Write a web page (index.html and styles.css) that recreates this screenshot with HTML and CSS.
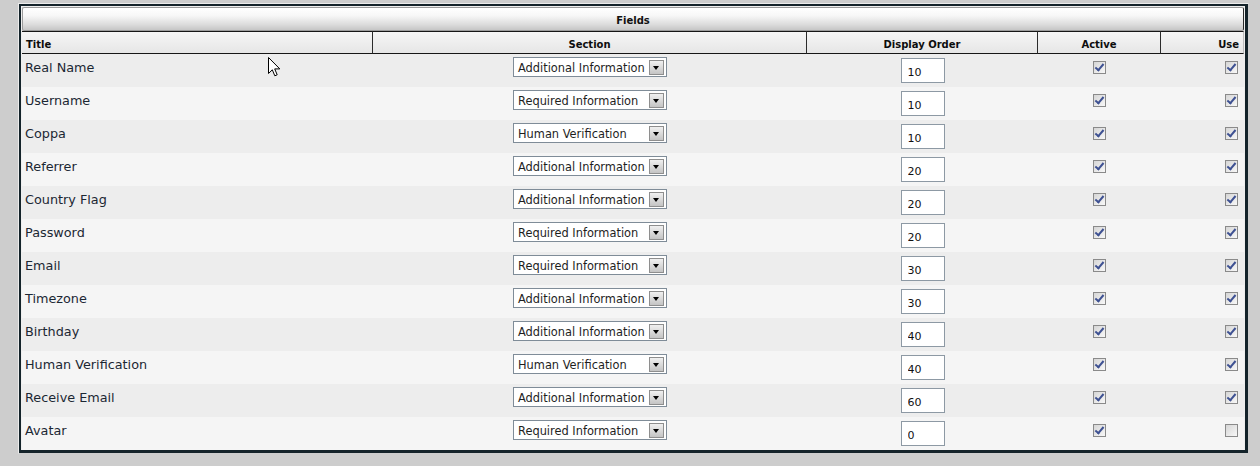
FILE: index.html
```html
<!DOCTYPE html>
<html>
<head>
<meta charset="utf-8">
<title>Fields</title>
<link rel="stylesheet" href="styles.css">
</head>
<body>
<div class="panel">
  <div class="frame">
    <div class="bar">Fields</div>
    <table class="grid">
      <colgroup>
        <col class="c-title"><col class="c-section"><col class="c-order"><col class="c-active"><col class="c-use">
      </colgroup>
      <thead>
        <tr>
          <th class="h-title">Title</th>
          <th class="h-center">Section</th>
          <th class="h-center">Display Order</th>
          <th class="h-center">Active</th>
          <th class="h-use">Use</th>
        </tr>
      </thead>
      <tbody>
        <tr><td class="t-title">Real Name</td><td class="t-center"><div class="sel"><span>Additional Information</span><span class="btn"></span></div></td><td class="t-center"><input class="num" type="text" value="10"></td><td class="t-center"><span class="cb on"></span></td><td class="t-use"><span class="cb on"></span></td></tr>
        <tr><td class="t-title">Username</td><td class="t-center"><div class="sel"><span>Required Information</span><span class="btn"></span></div></td><td class="t-center"><input class="num" type="text" value="10"></td><td class="t-center"><span class="cb on"></span></td><td class="t-use"><span class="cb on"></span></td></tr>
        <tr><td class="t-title">Coppa</td><td class="t-center"><div class="sel"><span>Human Verification</span><span class="btn"></span></div></td><td class="t-center"><input class="num" type="text" value="10"></td><td class="t-center"><span class="cb on"></span></td><td class="t-use"><span class="cb on"></span></td></tr>
        <tr><td class="t-title">Referrer</td><td class="t-center"><div class="sel"><span>Additional Information</span><span class="btn"></span></div></td><td class="t-center"><input class="num" type="text" value="20"></td><td class="t-center"><span class="cb on"></span></td><td class="t-use"><span class="cb on"></span></td></tr>
        <tr><td class="t-title">Country Flag</td><td class="t-center"><div class="sel"><span>Additional Information</span><span class="btn"></span></div></td><td class="t-center"><input class="num" type="text" value="20"></td><td class="t-center"><span class="cb on"></span></td><td class="t-use"><span class="cb on"></span></td></tr>
        <tr><td class="t-title">Password</td><td class="t-center"><div class="sel"><span>Required Information</span><span class="btn"></span></div></td><td class="t-center"><input class="num" type="text" value="20"></td><td class="t-center"><span class="cb on"></span></td><td class="t-use"><span class="cb on"></span></td></tr>
        <tr><td class="t-title">Email</td><td class="t-center"><div class="sel"><span>Required Information</span><span class="btn"></span></div></td><td class="t-center"><input class="num" type="text" value="30"></td><td class="t-center"><span class="cb on"></span></td><td class="t-use"><span class="cb on"></span></td></tr>
        <tr><td class="t-title">Timezone</td><td class="t-center"><div class="sel"><span>Additional Information</span><span class="btn"></span></div></td><td class="t-center"><input class="num" type="text" value="30"></td><td class="t-center"><span class="cb on"></span></td><td class="t-use"><span class="cb on"></span></td></tr>
        <tr><td class="t-title">Birthday</td><td class="t-center"><div class="sel"><span>Additional Information</span><span class="btn"></span></div></td><td class="t-center"><input class="num" type="text" value="40"></td><td class="t-center"><span class="cb on"></span></td><td class="t-use"><span class="cb on"></span></td></tr>
        <tr><td class="t-title">Human Verification</td><td class="t-center"><div class="sel"><span>Human Verification</span><span class="btn"></span></div></td><td class="t-center"><input class="num" type="text" value="40"></td><td class="t-center"><span class="cb on"></span></td><td class="t-use"><span class="cb on"></span></td></tr>
        <tr><td class="t-title">Receive Email</td><td class="t-center"><div class="sel"><span>Additional Information</span><span class="btn"></span></div></td><td class="t-center"><input class="num" type="text" value="60"></td><td class="t-center"><span class="cb on"></span></td><td class="t-use"><span class="cb on"></span></td></tr>
        <tr><td class="t-title">Avatar</td><td class="t-center"><div class="sel"><span>Required Information</span><span class="btn"></span></div></td><td class="t-center"><input class="num" type="text" value="0"></td><td class="t-center"><span class="cb on"></span></td><td class="t-use"><span class="cb"></span></td></tr>
      </tbody>
    </table>
  </div>
</div>
<svg class="cursor" width="13" height="21" viewBox="0 0 13 21"><path d="M0.5 0.5 L0.5 16.5 L4.3 12.8 L6.8 18.8 L9.2 17.8 L6.7 11.9 L11.8 11.9 Z" fill="#fff" stroke="#000" stroke-width="1" stroke-linejoin="miter"/></svg>
</body>
</html>
```

FILE: styles.css
```css
html, body {
  margin: 0;
  padding: 0;
}
body {
  background: #cdcdcd;
  padding-top: 3px;
  font-family: "DejaVu Sans", Verdana, sans-serif;
  position: relative;
  height: 466px;
  box-sizing: border-box;
  overflow: hidden;
}
.panel {
  margin-left: 18px;
  width: 1231px;
  box-sizing: border-box;
  border: 1px solid;
  border-color: #ececec #cdcdcd #cdcdcd #ececec;
}
.frame {
  border-style: solid;
  border-color: #14232a;
  border-width: 2px 3px 3px 2px;
  padding: 1px 1px 0 1px;
  background: #efefef;
}
.bar {
  height: 19px;
  padding-top: 3px;
  line-height: 19px;
  border: 1px solid #9c9c9c;
  border-right-color: #2a2a2a;
  border-radius: 2px;
  background: linear-gradient(#ffffff 0%, #f7f7f7 35%, #dcdcdc 75%, #c6c6c6 100%);
  text-align: center;
  font-weight: bold;
  font-size: 10px;
  color: #111;
}
.grid {
  width: 1222px;
  table-layout: fixed;
  border-collapse: separate;
  border-spacing: 0;
}
.c-title { width: 351px; }
.c-section { width: 434px; }
.c-order { width: 231px; }
.c-active { width: 123px; }
.c-use { width: 83px; }
.grid th {
  font-size: 10px;
  font-weight: bold;
  color: #0d0d0d;
  line-height: 17px;
  padding: 4px 4px 0;
  border-top: 1px solid #161616;
  border-bottom: 1px solid #161616;
  border-right: 1px solid #2b2b2b;
  background: linear-gradient(#f6f6f6, #e6e6e6);
  white-space: nowrap;
}
.grid th.h-title { text-align: left; }
.grid th.h-center { text-align: center; }
.grid th.h-use { text-align: right; border-right: 1px solid #bdbdbd; }
.grid tbody tr { height: 33px; }
.grid tbody tr:nth-child(odd) td { background: #ededed; }
.grid tbody tr:nth-child(even) td { background: #f5f5f5; }
.grid td {
  vertical-align: top;
  padding: 3px 4px 0;
  font-size: 12px;
  color: #1b2733;
}
.grid td.t-title {
  padding-left: 3px;
  padding-top: 4px;
  font-size: 12.8px;
  line-height: 20px;
}
.grid td.t-center { text-align: center; }
.grid td.t-use { text-align: right; padding-right: 6px; }

.sel {
  display: inline-flex;
  align-items: center;
  justify-content: space-between;
  width: 154px;
  height: 20px;
  box-sizing: border-box;
  border: 1px solid #7f8c98;
  background: #fff;
  padding: 0 2px 0 4px;
  font-size: 11.4px;
  color: #1e1e1e;
  text-align: left;
  vertical-align: top;
  white-space: nowrap;
}
.sel > span:first-child {
  padding-top: 2px;
}
.btn {
  width: 15px;
  height: 15px;
  box-sizing: border-box;
  border: 1px solid #8e8e8e;
  background: linear-gradient(#f0f0f0, #c4c4c4);
  position: relative;
  flex: none;
}
.btn::after {
  content: "";
  position: absolute;
  left: 3px;
  top: 5px;
  border-left: 3.5px solid transparent;
  border-right: 3.5px solid transparent;
  border-top: 4px solid #000;
}
.num {
  width: 44px;
  height: 25px;
  box-sizing: border-box;
  margin: 1px 0 0 0;
  border: 1px solid #8d99a4;
  background: #fff;
  padding: 3px 0 0 6px;
  font-family: "DejaVu Sans", Verdana, sans-serif;
  font-size: 11px;
  color: #111;
  vertical-align: top;
  outline: none;
}
.cb {
  display: inline-block;
  width: 13px;
  height: 13px;
  box-sizing: border-box;
  margin-top: 4px;
  border: 1px solid #8a8a8a;
  background: linear-gradient(135deg, #d6d6d6, #f8f8f8);
  vertical-align: top;
  position: relative;
}
.cb.on::after {
  content: "";
  position: absolute;
  left: 3px;
  top: 0px;
  width: 3px;
  height: 7px;
  border-right: 2px solid #3e5192;
  border-bottom: 2px solid #3e5192;
  transform: rotate(40deg);
}
.cursor {
  position: absolute;
  left: 268px;
  top: 57px;
}
```
